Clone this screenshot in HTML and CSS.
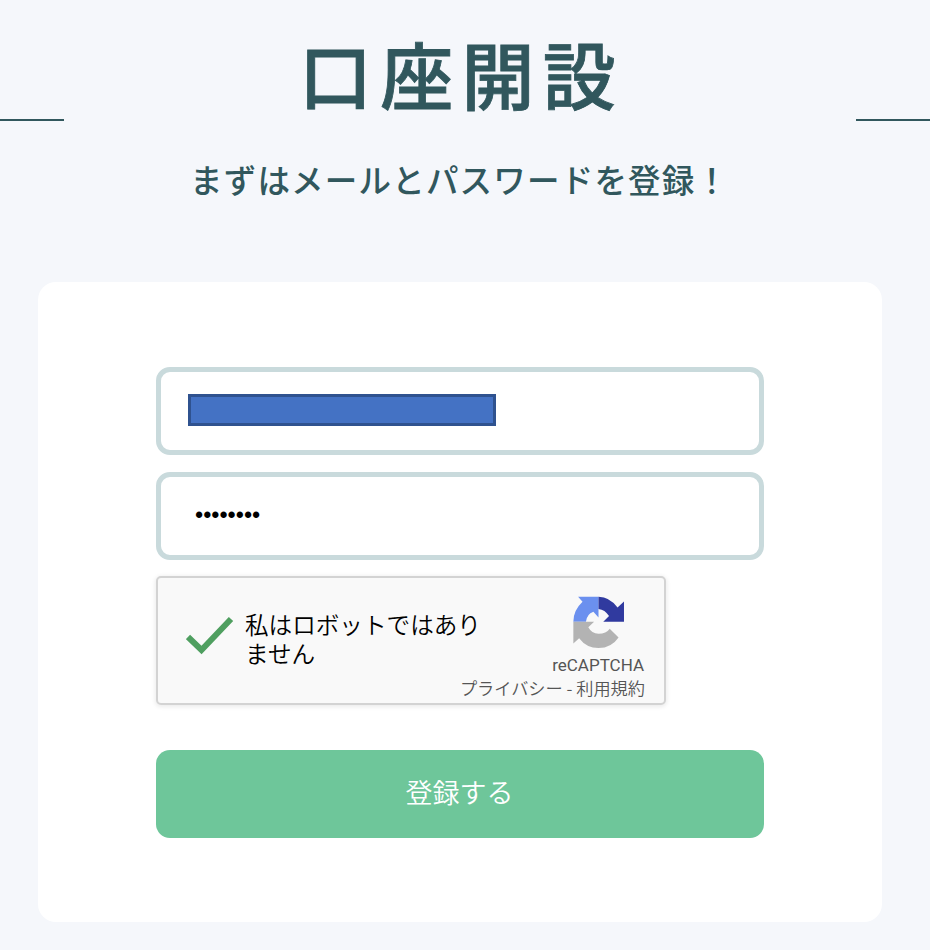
FILE: index.html
```html
<!DOCTYPE html>
<html lang="ja">
<head>
    <meta charset="UTF-8">
    <meta name="viewport" content="width=device-width, initial-scale=1.0">
    <title>口座開設</title>
    <link rel="stylesheet" href="styles.css">
</head>
<body>

<header class="heading">
    <span class="line line-left"></span>
    <h1>口座開設</h1>
    <span class="line line-right"></span>
</header>
<p class="lead">まずはメールとパスワードを登録！</p>

<form class="card">
    <div class="field">
        <div class="mask"></div>
    </div>
    <div class="field">
        <input class="password" type="password" value="password">
    </div>
    <div class="captcha">
        <svg class="check" width="50" height="42" viewBox="0 0 50 42">
            <path d="M2 23 L15.5 36 L45 5" fill="none" stroke="#4f9f60" stroke-width="6"/>
        </svg>
        <div class="captcha-label">
            <div>私はロボットではあり</div>
            <div>ません</div>
        </div>
        <div class="captcha-brand">
            <svg class="logo" width="51" height="52" viewBox="0 0 150 153">
                <path fill="#6b90ef" d="M15 2H75V63L60 46Q40 53 38 76H1Q1 42 28 17Z"/>
                <path fill="#303a9f" d="M75 2Q108 2 131 34L150 16V76H89L106 59Q94 40 75 38Z"/>
                <path fill="#b3b3b3" d="M1 76H62L45 92Q55 111 75 111Q98 111 108 96L134 122Q113 153 75 153Q40 153 18 124L1 140Z"/>
            </svg>
            <div class="brand-name">reCAPTCHA</div>
            <div class="brand-links">プライバシー - 利用規約</div>
        </div>
    </div>
    <button class="submit" type="button">登録する</button>
</form>

</body>
</html>
```
FILE: styles.css
```css
* {
    box-sizing: border-box;
}
body {
    margin: 0;
    height: 950px;
    overflow: hidden;
    background: #f5f7fb;
    color: #31575d;
    font-family: "Noto Sans CJK JP", sans-serif;
}
.heading {
    display: flex;
    justify-content: space-between;
    height: 150px;
    padding-top: 18px;
}
.heading h1 {
    margin: 0;
    font-size: 73px;
    font-weight: 500;
    line-height: 108px;
    letter-spacing: 8.3px;
    padding-left: 3px;
    -webkit-text-stroke: 0.8px #31575d;
}
.line {
    height: 2px;
    margin-top: 101px;
    background: #31575d;
}
.line-left {
    width: 64px;
}
.line-right {
    width: 74px;
}
.lead {
    margin: -1px 0 0;
    padding-left: 190px;
    height: 133px;
    font-size: 32.5px;
    font-weight: 500;
    line-height: 60px;
    letter-spacing: 1.2px;
    white-space: nowrap;
}
.card {
    width: 844px;
    height: 640px;
    margin-left: 38px;
    padding: 85px 118px 84px;
    background: white;
    border-radius: 18px;
}
.field {
    height: 88px;
    margin-bottom: 17px;
    padding: 22px 27px;
    border: 5px solid #c9dadc;
    border-radius: 14px;
}
.field + .field {
    margin-bottom: 16px;
}
.mask {
    width: 308px;
    height: 32px;
    background: #4472c4;
    border: 3px solid #2f528f;
}
.password {
    display: block;
    width: 100%;
    height: 32px;
    padding: 0 0 0 7px;
    border: none;
    outline: none;
    color: black;
    font-family: "Liberation Sans", Arial, sans-serif;
    font-size: 23.3px;
}
.captcha {
    display: flex;
    width: 510px;
    height: 129px;
    margin-bottom: 45px;
    padding-left: 28px;
    background: #f9f9f9;
    border: 2px solid #d3d3d3;
    border-radius: 5px;
    box-shadow: 0 1px 4px 1px rgba(0, 0, 0, 0.08);
}
.check {
    margin-top: 36px;
}
.captcha-label {
    width: 214px;
    margin: 32px 0 0 9px;
    color: black;
    font-size: 23.6px;
    font-weight: 350;
    line-height: 29px;
    white-space: nowrap;
}
.captcha-brand {
    display: flex;
    flex-direction: column;
    align-items: flex-end;
    width: 186px;
    color: #555;
    white-space: nowrap;
}
.logo {
    margin: 18px 21px 0 0;
}
.brand-name {
    margin: 6px 1px 0 0;
    font-family: Roboto, sans-serif;
    font-size: 17px;
    line-height: 22px;
}
.brand-links {
    font-size: 17.2px;
    font-weight: 350;
    line-height: 23px;
}
.submit {
    display: block;
    width: 100%;
    height: 88px;
    padding: 0 1px 5px 0;
    border: none;
    border-radius: 14px;
    background: #6ec69a;
    color: white;
    font-family: "Noto Sans CJK JP", sans-serif;
    font-size: 27px;
    font-weight: 350;
    cursor: pointer;
}
```
